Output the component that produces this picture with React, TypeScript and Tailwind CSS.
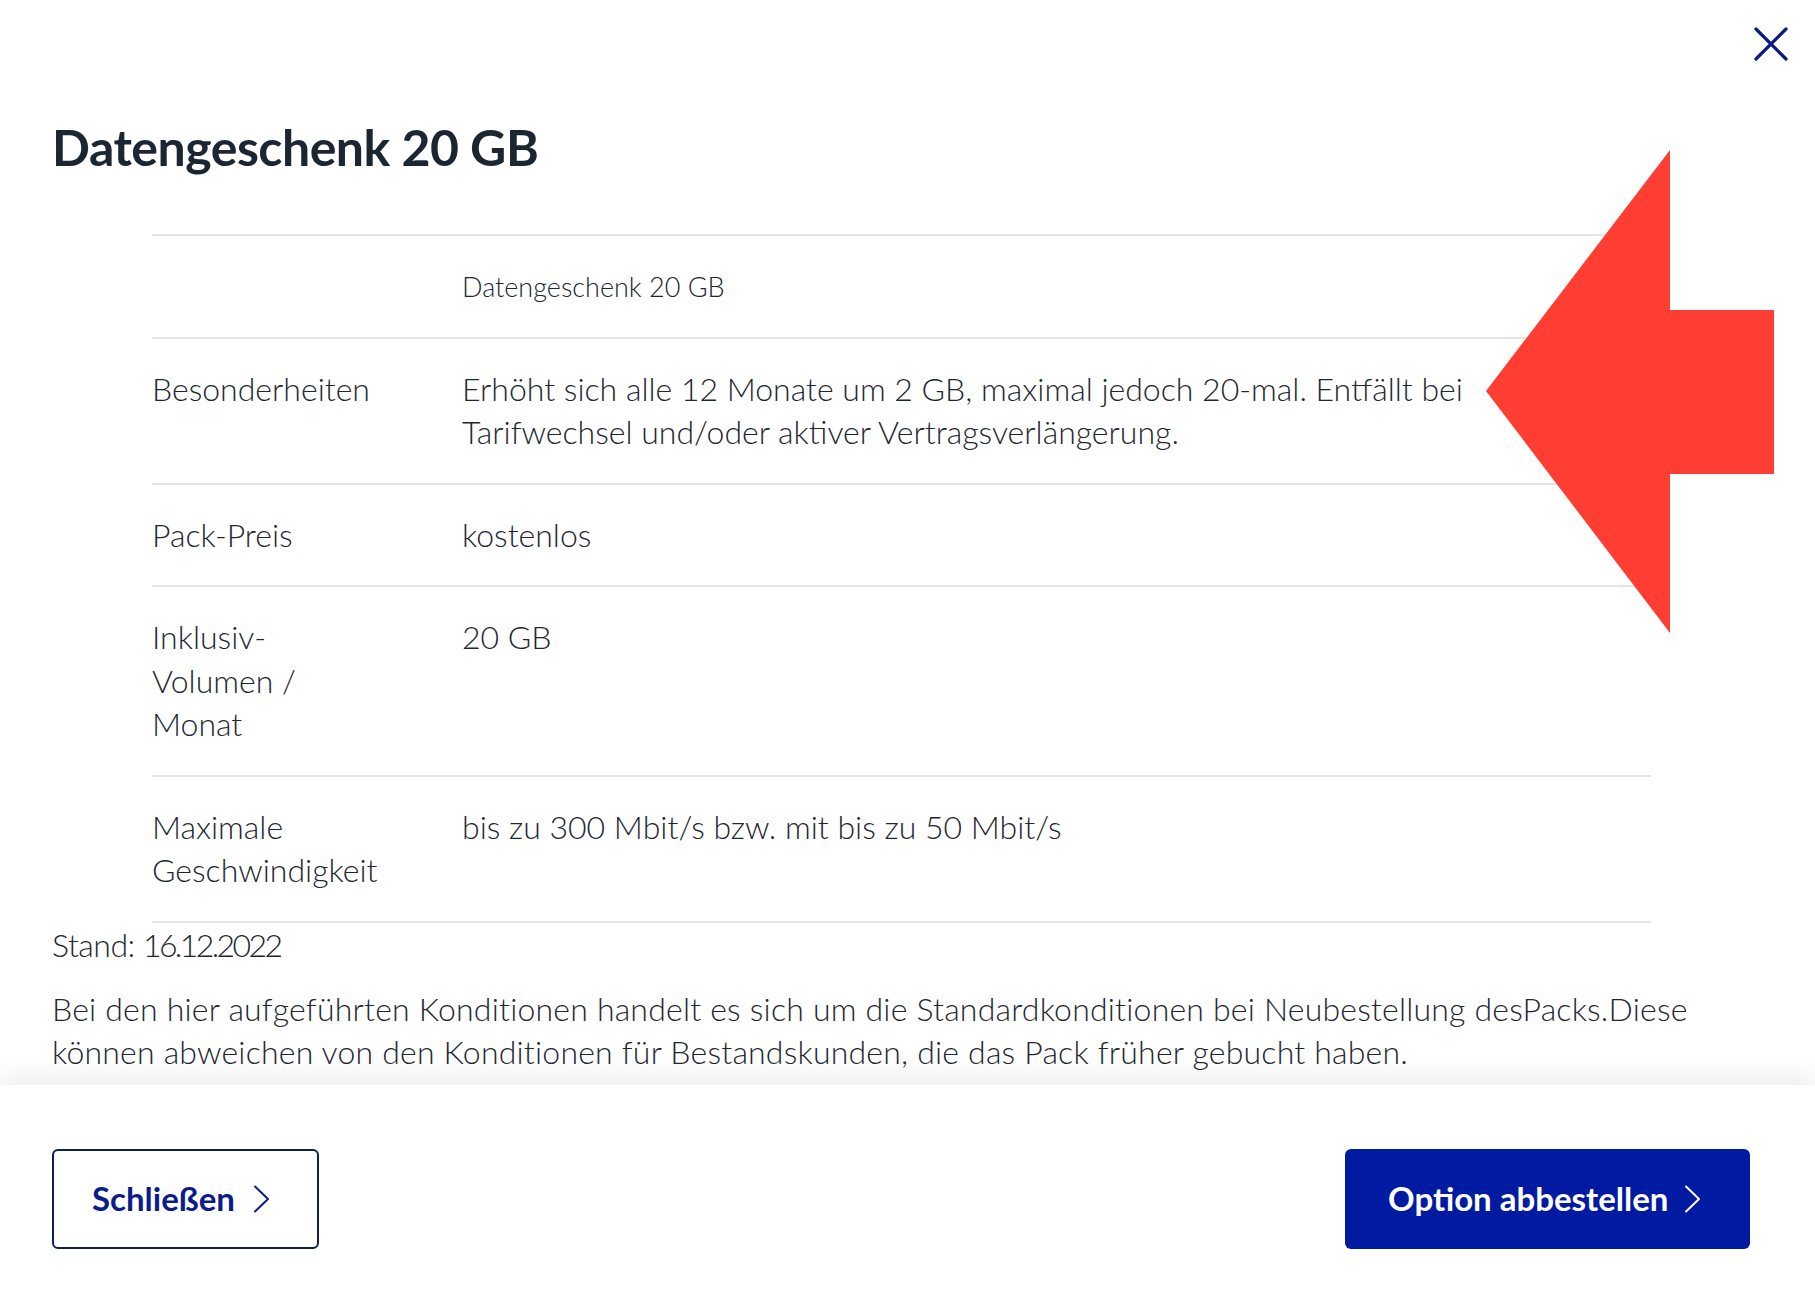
import React from "react";

const font = { fontFamily: "Lato, 'Noto Sans', sans-serif" };

function Chevron({ color }: { color: string }) {
  return (
    <svg width="17" height="28" viewBox="0 0 17 28" fill="none" className="shrink-0">
      <path d="M2 1.5 L15 14 L2 26.5" stroke={color} strokeWidth="2" strokeLinecap="round" strokeLinejoin="round" />
    </svg>
  );
}

const rows: { label: React.ReactNode; value: React.ReactNode; small?: boolean }[] = [
  { label: "", value: "Datengeschenk 20 GB", small: true },
  {
    label: "Besonderheiten",
    value: (
      <>
        Erhöht sich alle 12 Monate um 2 GB, maximal jedoch 20-mal. Entfällt bei
        <br />
        Tarifwechsel und/oder aktiver Vertragsverlängerung.
      </>
    ),
  },
  { label: "Pack-Preis", value: "kostenlos" },
  {
    label: (
      <>
        Inklusiv-
        <br />
        Volumen /
        <br />
        Monat
      </>
    ),
    value: "20 GB",
  },
  {
    label: (
      <>
        Maximale
        <br />
        Geschwindigkeit
      </>
    ),
    value: "bis zu 300 Mbit/s bzw. mit bis zu 50 Mbit/s",
  },
];

export default function App() {
  return (
    <div className="relative w-full h-[1304px] bg-white overflow-hidden text-[#1d2731]" style={font}>
      {/* header */}
      <div className="flex justify-end pt-[27px] pr-[27px]">
        <svg width="34" height="34" viewBox="0 0 34 34" fill="none">
          <path d="M2 2 L32 32 M32 2 L2 32" stroke="#0c1a86" strokeWidth="3.2" strokeLinecap="round" />
        </svg>
      </div>

      <div className="pl-[52px] pr-[52px]">
        <h1 className="mt-[56px] text-[50px] leading-[60px] font-bold text-[#1b2632] tracking-[-0.5px]">
          Datengeschenk 20 GB
        </h1>

        <div className="ml-[100px] w-[1499px] mt-[57px] border-t-2 border-[#e4e4e4]">
          {rows.map((r, i) => (
            <div
              key={i}
              className={
                r.small
                  ? "flex border-b-2 border-[#e4e4e4] pt-[29px] pb-[28px]"
                  : "flex border-b-2 border-[#e4e4e4] pt-[28px] pb-[29px]"
              }
            >
              <div className="w-[310px] shrink-0 text-[32px] leading-[43.5px] font-light">{r.label}</div>
              <div
                className={
                  r.small
                    ? "text-[27px] leading-[43.5px] font-light"
                    : "text-[32px] leading-[43.5px] font-light"
                }
              >
                {r.value}
              </div>
            </div>
          ))}
        </div>

        <div className="text-[32px] leading-[43px] font-light">
          <span className="tracking-[-0.5px]">Stand: </span>
          <span className="tracking-[-2.6px]">16.12.2022</span>
        </div>
        <p className="mt-[21px] text-[32px] leading-[43px] font-light tracking-[0.2px]">
          Bei den hier aufgeführten Konditionen handelt es sich um die Standardkonditionen bei Neubestellung desPacks.Diese
          <br />
          können abweichen von den Konditionen für Bestandskunden, die das Pack früher gebucht haben.
        </p>
      </div>

      {/* footer */}
      <div className="absolute left-0 right-0 bottom-0 h-[219px] bg-white shadow-[0_-10px_24px_rgba(0,0,0,0.07)] pl-[52px] pr-[65px] pt-[64px]">
        <div className="flex justify-between">
          <button className="h-[100px] w-[267px] rounded-[6px] border-2 border-[#0f1d57] flex items-center pl-[38px] gap-[18px] text-[#0c1c8a] text-[33px] font-bold">
            <span>Schließen</span>
            <Chevron color="#0c1c8a" />
          </button>
          <button className="h-[100px] w-[405px] rounded-[6px] bg-[#001aa2] flex items-center pl-[43px] gap-[16px] text-white text-[33px] font-bold">
            <span>Option abbestellen</span>
            <Chevron color="#ffffff" />
          </button>
        </div>
      </div>

      {/* red arrow annotation */}
      <svg className="absolute left-0 top-0 pointer-events-none" width="1815" height="1304" viewBox="0 0 1815 1304">
        <polygon
          points="1486,391 1670,150 1670,310 1774,310 1774,474 1670,474 1670,633"
          fill="#fe3d33"
        />
      </svg>
    </div>
  );
}
